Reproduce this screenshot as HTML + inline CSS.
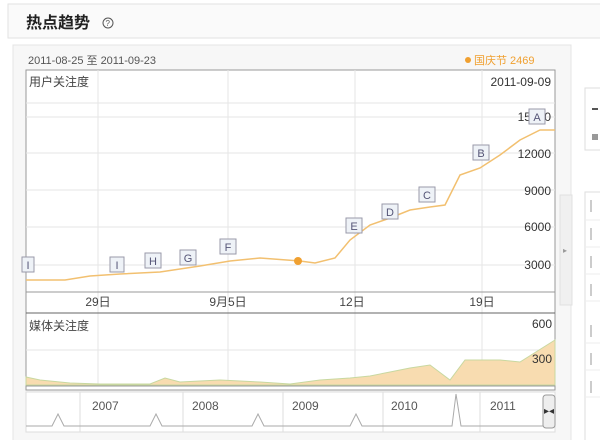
<!DOCTYPE html><html><head><meta charset="utf-8"><style>
body{margin:0;width:600px;height:440px;background:#fff;overflow:hidden;font-family:"Liberation Sans","Noto Sans CJK SC",sans-serif}
</style></head><body>
<svg width="600" height="440" xmlns="http://www.w3.org/2000/svg" font-family="Liberation Sans, Noto Sans CJK SC, sans-serif">
<rect x="0" y="0" width="600" height="440" fill="#fff"/>
<rect x="8" y="4" width="600" height="34" fill="#fafafa" stroke="#e2e2e2"/>
<text x="26" y="28" font-size="16" font-weight="bold" fill="#222">热点趋势</text>
<circle cx="108" cy="23" r="5" fill="none" stroke="#555"/><text x="105.5" y="26" font-size="8" fill="#555">?</text>
<rect x="13" y="45" width="558" height="400" fill="#f7f7f7" stroke="#e4e4e4"/>
<text x="28" y="64" font-size="11" fill="#555">2011-08-25 至 2011-09-23</text>
<circle cx="468" cy="60" r="3" fill="#f0a030"/><text x="474" y="64" font-size="11" fill="#f0a030">国庆节 2469</text>
<rect x="26" y="70" width="529" height="320" fill="#fff" stroke="#999"/>
<g stroke="#e6e6e6" stroke-width="1">
<line x1="98" y1="70" x2="98" y2="385"/><line x1="228" y1="70" x2="228" y2="385"/><line x1="355" y1="70" x2="355" y2="385"/><line x1="482" y1="70" x2="482" y2="385"/>
<line x1="26" y1="103" x2="555" y2="103"/><line x1="26" y1="117" x2="555" y2="117"/><line x1="26" y1="153" x2="555" y2="153"/><line x1="26" y1="190" x2="555" y2="190"/><line x1="26" y1="227" x2="555" y2="227"/><line x1="26" y1="265" x2="555" y2="265"/>
<line x1="26" y1="350" x2="555" y2="350"/>
</g>
<text x="29" y="86" font-size="12" fill="#444">用户关注度</text>
<text x="551" y="86" font-size="12" fill="#333" text-anchor="end">2011-09-09</text>
<g font-size="12" fill="#333" text-anchor="end"><text x="551" y="121">15000</text><text x="551" y="158">12000</text><text x="551" y="195">9000</text><text x="551" y="231">6000</text><text x="551" y="269">3000</text></g>
<polyline fill="none" stroke="#f2c070" stroke-width="1.5" points="26,280 65,280 90,276 120,274 160,272 200,266 230,261 260,258 300,261 315,263 335,258 350,240 370,225 390,218 410,210 430,207 445,205 460,175 480,168 500,155 520,140 540,130 555,130"/>
<circle cx="298" cy="261" r="4" fill="#f0a030"/>
<g font-size="11" fill="#557" text-anchor="middle">
<g fill="#eef2f7" stroke="#99a"><rect x="22" y="257" width="12" height="15"/><rect x="110" y="257" width="14" height="15"/><rect x="145" y="253" width="16" height="15"/><rect x="180" y="250" width="16" height="15"/><rect x="220" y="239" width="16" height="15"/><rect x="346" y="218" width="16" height="15"/><rect x="382" y="204" width="16" height="15"/><rect x="419" y="187" width="16" height="15"/><rect x="473" y="145" width="16" height="15"/><rect x="529" y="109" width="16" height="15"/></g>
<text x="28" y="269">I</text><text x="117" y="269">I</text><text x="153" y="265">H</text><text x="188" y="262">G</text><text x="228" y="251">F</text><text x="354" y="230">E</text><text x="390" y="216">D</text><text x="427" y="199">C</text><text x="481" y="157">B</text><text x="537" y="121">A</text></g>
<line x1="26" y1="292" x2="555" y2="292" stroke="#999"/><line x1="26" y1="313" x2="555" y2="313" stroke="#666"/>
<g font-size="12" fill="#444" text-anchor="middle"><text x="98" y="306">29日</text><text x="228" y="306">9月5日</text><text x="352" y="306">12日</text><text x="482" y="306">19日</text></g>
<text x="29" y="330" font-size="12" fill="#444">媒体关注度</text>
<polygon fill="#f8dcb0" stroke="#c8d8a0" points="26,377 40,380 70,383 100,384 150,384 165,378 180,382 220,380 260,382 290,384 320,380 350,378 370,376 390,372 410,368 430,365 450,380 465,360 480,360 500,360 520,362 555,340 555,385 26,385"/>
<g font-size="12" fill="#333" text-anchor="end"><text x="552" y="328">600</text><text x="552" y="363">300</text></g>
<line x1="26" y1="386" x2="555" y2="386" stroke="#999"/>
<rect x="26" y="392" width="529" height="40" fill="#fff" stroke="#ddd"/>
<g stroke="#ddd"><line x1="80" y1="392" x2="80" y2="432"/><line x1="183" y1="392" x2="183" y2="432"/><line x1="283" y1="392" x2="283" y2="432"/><line x1="383" y1="392" x2="383" y2="432"/><line x1="480" y1="392" x2="480" y2="432"/></g>
<g font-size="12" fill="#555"><text x="92" y="410">2007</text><text x="192" y="410">2008</text><text x="292" y="410">2009</text><text x="391" y="410">2010</text><text x="490" y="410">2011</text></g>
<polyline fill="none" stroke="#aaa" points="26,426 52,426 58,414 64,426 150,426 156,414 162,426 252,426 258,414 264,426 350,426 356,414 362,426 452,426 456,394 461,426 555,426"/>
<rect x="543" y="395" width="12" height="33" rx="3" fill="#eee" stroke="#999"/><text x="544" y="414" font-size="10" fill="#333">▸◂</text>
<rect x="560" y="195" width="12" height="110" fill="#f0f0f0" stroke="#e0e0e0"/><text x="563" y="253" font-size="8" fill="#999">▸</text>
<rect x="585" y="88" width="20" height="62" fill="#fff" stroke="#ddd"/>
<rect x="592" y="108" width="6" height="2" fill="#555"/><rect x="592" y="134" width="6" height="6" fill="#999"/>
<rect x="585" y="192" width="20" height="250" fill="#fff" stroke="#ddd"/>
<g fill="#ccc"><rect x="590" y="200" width="2" height="12"/><rect x="590" y="228" width="2" height="12"/><rect x="590" y="256" width="2" height="12"/><rect x="590" y="284" width="2" height="12"/><rect x="590" y="325" width="2" height="12"/><rect x="590" y="353" width="2" height="12"/><rect x="590" y="381" width="2" height="12"/></g>
<g stroke="#eee"><line x1="585" y1="220" x2="600" y2="220"/><line x1="585" y1="247" x2="600" y2="247"/><line x1="585" y1="274" x2="600" y2="274"/><line x1="585" y1="301" x2="600" y2="301"/><line x1="585" y1="343" x2="600" y2="343"/><line x1="585" y1="370" x2="600" y2="370"/><line x1="585" y1="397" x2="600" y2="397"/></g>
</svg></body></html>
